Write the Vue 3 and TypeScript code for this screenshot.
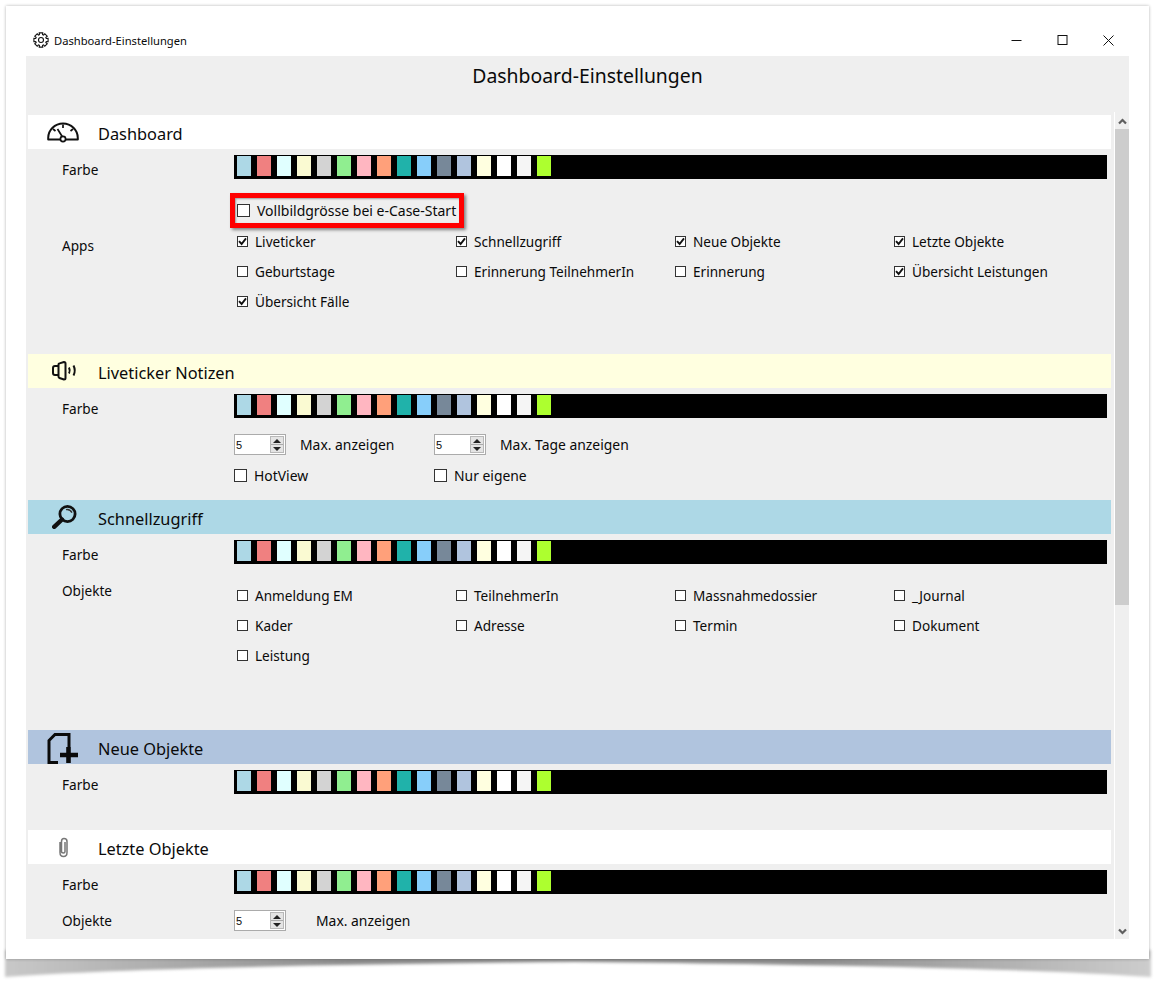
<script setup lang="ts">
const swatches: string[] = ['#ADD8E6','#F08080','#E0FFFF','#FAFAD2','#D3D3D3','#90EE90','#FFB6C1','#FFA07A','#20B2AA','#87CEFA','#778899','#B0C4DE','#FFFFE0','#FFFFFF','#F5F5F5','#ADFF2F']
type Opt = { t: string; on: boolean }
const apps: Opt[] = [
  { t: 'Liveticker', on: true }, { t: 'Schnellzugriff', on: true }, { t: 'Neue Objekte', on: true }, { t: 'Letzte Objekte', on: true },
  { t: 'Geburtstage', on: false }, { t: 'Erinnerung TeilnehmerIn', on: false }, { t: 'Erinnerung', on: false }, { t: 'Übersicht Leistungen', on: true },
  { t: 'Übersicht Fälle', on: true },
]
const objs: Opt[] = ['Anmeldung EM','TeilnehmerIn','Massnahmedossier','_Journal','Kader','Adresse','Termin','Dokument','Leistung'].map(t => ({ t, on: false }))
function gear(): string {
  const pts: string[] = []
  const cx = 8, cy = 8, n = 8
  for (let i = 0; i < n; i++) {
    const a = (i / n) * Math.PI * 2
    const w = 0.24
    const p = (r: number, x: number) => `${(cx + r * Math.cos(x)).toFixed(2)} ${(cy + r * Math.sin(x)).toFixed(2)}`
    pts.push((i ? 'L' : 'M') + p(5.5, a - 0.39 + 0.1), 'L' + p(7.3, a - w), 'L' + p(7.3, a + w), 'L' + p(5.5, a + 0.29))
  }
  return pts.join(' ') + ' Z'
}
const gearPath = gear()
</script>

<template>
  <div class="page">
    <svg class="drop" width="1163" height="988" viewBox="0 0 1163 988">
      <defs>
        <linearGradient id="sh" x1="0" x2="1" y1="0" y2="0">
          <stop offset="0" stop-color="#c8c8c8" />
          <stop offset="0.3" stop-color="#8c8c8c" />
          <stop offset="0.7" stop-color="#8c8c8c" />
          <stop offset="1" stop-color="#cdcdcd" />
        </linearGradient>
        <filter id="bl" x="-2%" y="-20%" width="104%" height="140%"><feGaussianBlur stdDeviation="1.6" /></filter>
      </defs>
      <path d="M5 950 L1151 950 L1151 977 Q1000 966 575 962 Q150 966 5 977 Z" fill="url(#sh)" filter="url(#bl)" />
    </svg>
    <div class="win">
      <header class="titlebar">
        <svg class="gear" width="16" height="16" viewBox="0 0 16 16"><path :d="gearPath" fill="none" stroke="#111" stroke-width="1.1" /><circle cx="8" cy="8" r="2.5" fill="none" stroke="#111" stroke-width="1.1" /></svg>
        <span class="wintitle">Dashboard-Einstellungen</span>
        <div class="controls">
          <svg width="11" height="11" viewBox="0 0 11 11"><path d="M0.5 5.5H10.5" stroke="#111" /></svg>
          <svg width="11" height="11" viewBox="0 0 11 11"><rect x="1" y="0.5" width="9" height="9" fill="none" stroke="#111" /></svg>
          <svg width="11" height="11" viewBox="0 0 11 11"><path d="M0.5 0.5L10.5 10.5M10.5 0.5L0.5 10.5" stroke="#111" /></svg>
        </div>
      </header>
      <main class="panel">
        <h1 class="paneltitle">Dashboard-Einstellungen</h1>
        <div class="scroller">
          <div class="content">
            <section class="sec sec-dash">
              <div class="bar white">
                <span class="ico"><svg width="32" height="21" viewBox="0 0 32 21"><path d="M1.2 17.5V16A14.8 14.5 0 0 1 30.8 16V17.5Z" fill="none" stroke="#111" stroke-width="2" stroke-linejoin="round" /><path d="M16 2.5V6M6 7l2.5 2M26 7l-2.5 2M10.5 7l5 8" fill="none" stroke="#111" stroke-width="1.7" /><circle cx="16" cy="17" r="2.6" fill="#fff" stroke="#111" stroke-width="1.7" /></svg></span>
                <h2>Dashboard</h2>
              </div>
              <div class="field">
                <span class="lab lab-color">Farbe</span>
                <div class="strip"><i v-for="c in swatches" :key="c" :style="{ background: c }"></i></div>
              </div>
              <div class="field apps">
                <span class="lab lab-apps">Apps</span>
                <div>
                  <div class="mark">
                    <span class="box big"></span><span>Vollbildgrösse bei e-Case-Start</span>
                  </div>
                  <div class="opts">
                    <label v-for="o in apps" :key="o.t" class="opt">
                      <span class="box"><svg v-if="o.on" width="9" height="9" viewBox="0 0 9 9"><path d="M1 4.2L3.6 7L8 1.4" fill="none" stroke="#111" stroke-width="1.9" /></svg></span>{{ o.t }}
                    </label>
                  </div>
                </div>
              </div>
            </section>

            <section class="sec sec-live">
              <div class="bar yellow">
                <span class="ico ico-shift"><svg width="26" height="20" viewBox="0 0 26 20"><path d="M6.5 5H3Q1 5 1 7V12Q1 14 3 14H6.5M6.5 3.5Q6.5 2.5 7.5 2.4L12 1Q13.5 1 13.5 2.5V17Q13.5 18.500 12 18.500L7.5 17Q6.5 16.700 6.500 15.500Z" fill="none" stroke="#111" stroke-width="2" stroke-linejoin="round" /><path d="M17 6.500Q18.500 9.500 17 12.500M21.500 4.500Q24 9.500 21.500 14.500" fill="none" stroke="#111" stroke-width="2" /></svg></span>
                <h2>Liveticker Notizen</h2>
              </div>
              <div class="field">
                <span class="lab lab-color">Farbe</span>
                <div class="strip"><i v-for="c in swatches" :key="c" :style="{ background: c }"></i></div>
              </div>
              <div class="field">
                <span></span>
                <div>
                  <div class="pair spins">
                    <div class="spinline">
                      <div class="spin"><span>5</span><b class="btns"><em class="up"></em><em class="down"></em></b></div>
                      <span class="spintext">Max. anzeigen</span>
                    </div>
                    <div class="spinline">
                      <div class="spin"><span>5</span><b class="btns"><em class="up"></em><em class="down"></em></b></div>
                      <span class="spintext">Max. Tage anzeigen</span>
                    </div>
                  </div>
                  <div class="pair checks">
                    <label class="plain"><span class="box big"></span>HotView</label>
                    <label class="plain"><span class="box big"></span>Nur eigene</label>
                  </div>
                </div>
              </div>
            </section>

            <section class="sec sec-quick">
              <div class="bar blue">
                <span class="ico ico-shift"><svg width="26" height="24" viewBox="0 0 26 24"><circle cx="15.5" cy="9" r="7.6" fill="none" stroke="#111" stroke-width="2.8" /><path d="M10 14.5L2.2 21.8" stroke="#111" stroke-width="4.4" stroke-linecap="round" /><path d="M14 4.6Q18 3.8 20 7.6" fill="none" stroke="#333" stroke-width="1.4" /></svg></span>
                <h2>Schnellzugriff</h2>
              </div>
              <div class="field">
                <span class="lab lab-color">Farbe</span>
                <div class="strip"><i v-for="c in swatches" :key="c" :style="{ background: c }"></i></div>
              </div>
              <div class="field objs">
                <span class="lab lab-objs">Objekte</span>
                <div class="opts">
                  <label v-for="o in objs" :key="o.t" class="opt"><span class="box"></span>{{ o.t }}</label>
                </div>
              </div>
            </section>

            <section class="sec sec-new">
              <div class="bar steel">
                <span class="ico ico-new"><svg width="32" height="31" viewBox="0 0 32 31"><path d="M22 14V1.500H8L2 7.500V31M2 29.500H11" fill="none" stroke="#0a0a0a" stroke-width="3" /><path d="M21.500 14V30M13 22H31" stroke="#0a0a0a" stroke-width="4.600" /></svg></span>
                <h2>Neue Objekte</h2>
              </div>
              <div class="field">
                <span class="lab lab-color">Farbe</span>
                <div class="strip"><i v-for="c in swatches" :key="c" :style="{ background: c }"></i></div>
              </div>
            </section>

            <section class="sec sec-last">
              <div class="bar white">
                <span class="ico"><svg width="14" height="21" viewBox="0 0 14 21"><path d="M4 5V15.500Q4 19.500 7.500 19.500Q11 19.500 11 15.500V4.500Q11 1.500 8 1.500Q5.500 1.500 5.500 4.500V14.500Q5.500 16 7.500 16Q9 16 9 14.500V5" fill="none" stroke="#777" stroke-width="1.500" /></svg></span>
                <h2>Letzte Objekte</h2>
              </div>
              <div class="field">
                <span class="lab lab-color">Farbe</span>
                <div class="strip"><i v-for="c in swatches" :key="c" :style="{ background: c }"></i></div>
              </div>
              <div class="field last-row">
                <span class="lab lab-spin">Objekte</span>
                <div class="spinline">
                  <div class="spin"><span>5</span><b class="btns"><em class="up"></em><em class="down"></em></b></div>
                  <span class="spintext wide">Max. anzeigen</span>
                </div>
              </div>
            </section>
          </div>
          <aside class="scrollbar">
            <svg class="arrow" width="9" height="7" viewBox="0 0 9 7"><path d="M1 5.600L4.500 2L8 5.600" fill="none" stroke="#5f5f5f" stroke-width="2.200" /></svg>
            <div class="thumb"></div>
            <div class="rest"></div>
            <svg class="arrow" width="9" height="7" viewBox="0 0 9 7"><path d="M1 1.400L4.500 5L8 1.400" fill="none" stroke="#5f5f5f" stroke-width="2.200" /></svg>
          </aside>
        </div>
      </main>
    </div>
  </div>
</template>

<style scoped>
.page { position: relative; width: 1163px; height: 988px; overflow: hidden; background: #fff; font-family: "Noto Sans", "Open Sans", sans-serif; color: #0a0a0a; padding: 6px; box-sizing: border-box; }
.drop { position: absolute; left: 0; top: 0; }
.win { position: relative; width: 1143px; height: 953px; background: #fff; box-shadow: 0 0 3px rgba(0,0,0,.3); padding: 0 20px; box-sizing: border-box; }
.titlebar { height: 50px; display: flex; align-items: center; padding: 18px 0 0 7px; box-sizing: border-box; }
.gear { flex: none; }
.wintitle { font-size: 11.2px; margin-left: 5px; }
.controls { margin-left: auto; display: flex; gap: 35px; margin-right: 15px; margin-top: 1px; }
.panel { background: #efefef; height: 883px; overflow: hidden; }
.paneltitle { margin: 0; height: 56px; line-height: 40px; text-align: center; font-weight: 400; font-size: 19.4px; padding-left: 20px; }
.scroller { display: flex; height: 827px; }
.content { width: 1083px; margin-left: 2px; padding-top: 3px; overflow: hidden; }
.sec { box-sizing: border-box; }
.sec-dash { height: 239px; }
.sec-live { height: 146px; }
.sec-quick { height: 230px; }
.sec-new { height: 100px; }
.bar { height: 34px; display: flex; align-items: center; overflow: hidden; }
.white { background: #fff; }
.yellow { background: #FFFFE0; }
.blue { background: #ADD8E6; }
.steel { background: #B0C4DE; }
.ico { width: 70px; flex: none; display: flex; justify-content: center; box-sizing: border-box; }
.ico-shift { padding-left: 3px; }
.ico-new { align-self: flex-end; }
.bar h2 { margin: 0; padding-top: 3px; font-weight: 400; font-size: 16.35px; }
.field { display: grid; grid-template-columns: 172px 1fr; padding-left: 34px; font-size: 13.6px; }
.lab { display: block; }
.lab-color { line-height: 24px; margin: 9px 0 -3px; }
.lab-apps { margin-top: 58px; line-height: 18px; }
.lab-objs { margin-top: 18px; line-height: 18px; }
.lab-spin { margin-top: 18px; line-height: 18px; }
.strip { width: 873px; height: 24px; margin-top: 6px; background: #000; display: flex; gap: 6px; padding: 1px 3px 3px; box-sizing: border-box; }
.strip i { width: 14px; height: 20px; display: block; flex: none; }
.mark { margin: 14px 0 -2px -4px; width: 234px; height: 35px; box-sizing: border-box; border: 5px solid #f00; box-shadow: 2px 2px 3px rgba(0,0,0,.45), inset 1px 1px 2px rgba(0,0,0,.35); display: flex; align-items: center; padding-left: 2px; padding-bottom: 1px; font-size: 14px; }
.box { width: 9px; height: 9px; border: 1px solid #333; background: #fff; flex: none; display: inline-flex; align-items: center; justify-content: center; box-sizing: content-box; margin-right: 7px; }
.box.big { width: 11px; height: 11px; margin-right: 7px; }
.opts { display: grid; grid-template-columns: repeat(4, 219px); grid-auto-rows: 30px; padding-left: 3px; }
.opt { display: flex; align-items: center; }
.objs .opts { margin-top: 16px; }
.pair { display: grid; grid-template-columns: 200px 300px; font-size: 13.9px; }
.spins { margin-top: 16px; }
.checks { margin-top: 11px; height: 16px; }
.plain { display: flex; align-items: center; }
.spinline { display: flex; align-items: center; font-size: 13.9px; }
.spin { width: 52px; height: 21px; box-sizing: border-box; border: 1px solid #ababab; background: #fff; display: flex; align-items: center; justify-content: space-between; font-family: "Liberation Sans", sans-serif; font-size: 11px; padding-left: 1px; padding-right: 1px; }
.btns { width: 14px; height: 17px; display: flex; flex-direction: column; gap: 1px; background: #aaa; border: 1px solid #b8b8b8; box-sizing: border-box; }
.btns em { flex: 1; background: #e4e4e4; position: relative; display: block; }
.up::after, .down::after { content: ""; position: absolute; left: 50%; top: 50%; margin: -2px 0 0 -4px; border: 4px solid transparent; border-top-width: 0; border-bottom: 4px solid #222; }
.down::after { border-bottom-width: 0; border-top: 4px solid #222; border-bottom-color: transparent; }
.spintext { margin-left: 14px; }
.spintext.wide { margin-left: 30px; }
.last-row .spinline { margin-top: 16px; }
.scrollbar { width: 15px; margin-left: 3px; border-left: 1px solid #fff; box-sizing: border-box; display: flex; flex-direction: column; align-items: center; background: #efefef; }
.arrow { flex: none; margin: 6px 0 4px; }
.thumb { width: 14px; height: 476px; background: #cdcdcd; flex: none; }
.rest { flex: 1; }
</style>
